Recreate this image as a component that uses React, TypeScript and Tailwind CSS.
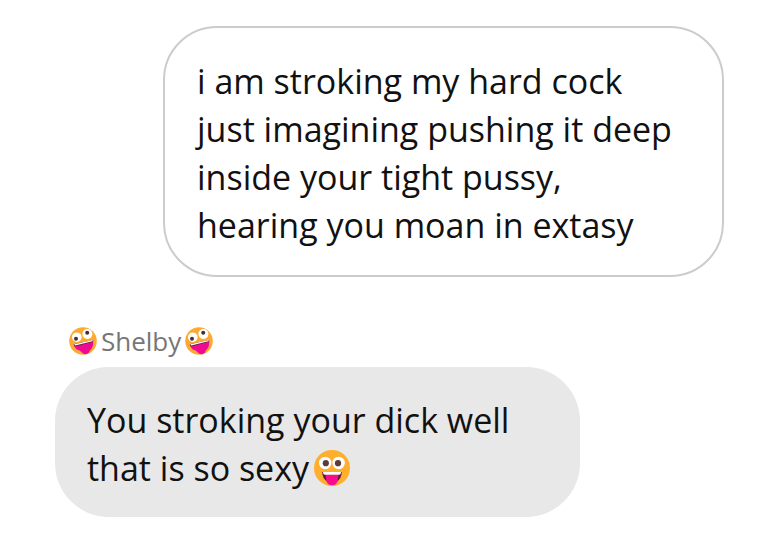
import React from 'react';

// Props shared by both emoji icons
interface EmojiProps {
    className?: string;
}

// Tilted face with the tongue out
const ZanyFace: React.FC<EmojiProps> = ({ className }) => (
    <svg viewBox="0 0 28 28" className={className} role="img" aria-label="zany face">
        <circle cx="14" cy="14" r="13.8" fill="#faab30" />
        <circle cx="7.8" cy="10.2" r="4.8" fill="#fff" />
        <circle cx="18.4" cy="7" r="5" fill="#fff" />
        <circle cx="7" cy="11.8" r="2" fill="#40303a" />
        <circle cx="18.2" cy="5.8" r="2" fill="#40303a" />
        <path d="M4.8 17.4L24 13.2C24.8 18 23.2 21.6 20.8 23.4C20 27 16.4 28 14 26.4C12.4 25.4 11.8 24.4 10.6 23.6C7.6 22.8 5.4 20.4 4.8 17.4Z" fill="#f00a93" />
        <path d="M4.7 17.2L24.1 12.9L24.1 14.8L5.7 19.4Z" fill="#5a2433" />
        <path d="M5.3 17.3L23.8 13.1L23.5 14.3L6.2 18.4Z" fill="#fff" />
    </svg>
);

// Straight face with wide open eyes and the tongue out
const TongueFace: React.FC<EmojiProps> = ({ className }) => (
    <svg viewBox="0 0 36 36" className={className} role="img" aria-label="face with tongue">
        <circle cx="18" cy="18" r="18" fill="#ffae2e" />
        <circle cx="11.2" cy="13" r="6.2" fill="#fff" />
        <circle cx="24.6" cy="13" r="6.2" fill="#fff" />
        <circle cx="11.8" cy="13.2" r="3.1" fill="#5a3b3e" />
        <circle cx="24" cy="13.2" r="3.1" fill="#5a3b3e" />
        <path d="M8.2 22H27.8C27.5 26.6 25.8 30 22.8 31.4L13.2 31.4C10.2 30 8.5 26.6 8.2 22Z" fill="#5e2030" />
        <path d="M11.6 24.4H24.4L23.6 31C22.6 36.6 13.4 36.6 12.4 31Z" fill="#fa0a8c" />
        <path d="M9 22H27C27 23.8 26.2 24.8 25 24.8H11C9.8 24.8 9 23.8 9 22Z" fill="#fff" />
    </svg>
);

export default function App() {
    return (
        <main className="flex min-h-screen flex-col bg-white pt-[26px] pr-[35px] pb-4 pl-[55px] font-['Open_Sans','Noto_Sans',sans-serif] text-[34px] leading-[48px] text-[#111]">
            {/* Outgoing message */}
            <div className="w-full max-w-[561px] self-end rounded-[54px] border-2 border-[#ccc] px-8 pt-[29px] pb-[26px]">
                <p>
                    i am stroking my hard cock
                    <br />
                    just imagining pushing it deep
                    <br />
                    inside your tight pussy,
                    <br />
                    hearing you moan in extasy
                </p>
            </div>

            {/* Sender name */}
            <div className="mt-12 flex items-center gap-1 pl-[14px] text-[26px] leading-8 text-[#767676]">
                <ZanyFace className="size-7" />
                <span>Shelby</span>
                <ZanyFace className="size-7" />
            </div>

            {/* Incoming message */}
            <div className="mt-[10px] w-full max-w-[525px] rounded-[54px] bg-[#e8e8e8] px-8 pt-[29px] pb-[25px]">
                <p>
                    You stroking your dick well
                    <br />
                    that is so sexy
                    <TongueFace className="ml-[5px] inline-block size-9 align-[-5px]" />
                </p>
            </div>
        </main>
    );
}
